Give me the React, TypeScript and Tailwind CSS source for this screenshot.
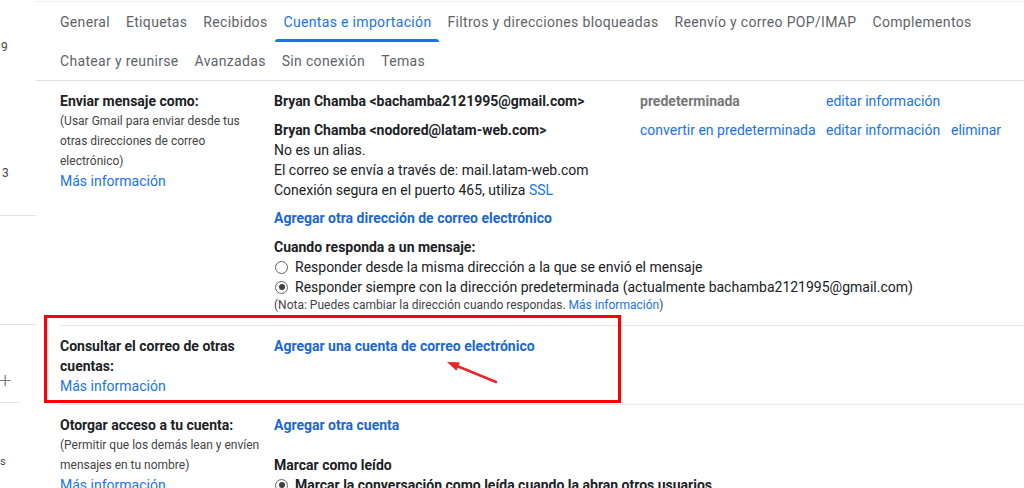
import React from "react";

const font = { fontFamily: "Roboto, 'Liberation Sans', Arial, sans-serif" };

const tabsTop = ["General", "Etiquetas", "Recibidos", "Cuentas e importación", "Filtros y direcciones bloqueadas", "Reenvío y correo POP/IMAP", "Complementos"];
const tabsBottom = ["Chatear y reunirse", "Avanzadas", "Sin conexión", "Temas"];

function Tab({ label, active = false }: { label: string; active?: boolean }) {
  return (
    <div className={`relative h-full flex items-center px-2 text-[14px] tracking-[0.33px] ${active ? "text-[#1a73e8]" : "text-[#5f6368]"}`}>
      {label}
      {active && <div className="absolute left-0 right-0 bottom-0 h-[3px] rounded-t-sm bg-[#1a73e8]" />}
    </div>
  );
}

function Radio({ checked = false }: { checked?: boolean }) {
  return (
    <span className="ml-px mr-[7px] w-[13px] h-[13px] shrink-0 rounded-full border-[1.5px] border-[#5f6368] flex items-center justify-center">
      {checked && <span className="w-[6px] h-[6px] rounded-full bg-[#3c4043]" />}
    </span>
  );
}

function Sidebar() {
  return (
    <div className="w-[36px] shrink-0 overflow-hidden text-[12px] text-[#444] leading-5">
      <div className="mt-[37px] pl-px">9</div>
      <div className="mt-[106px] pl-[2px]">3</div>
      <div className="mt-[32px] h-px bg-[#e4e4e4]" />
      <div className="mt-[108px] h-px bg-[#e4e4e4]" />
      <svg className="mt-[50px] block" width="11" height="11" viewBox="0 0 11 11">
        <path d="M0 5.5H10.5M5.2 0V11" stroke="#777" strokeWidth="1.2" />
      </svg>
      <div className="mt-[16px] w-[20px] h-px bg-[#e4e4e4]" />
      <div className="mt-[49px] text-[11px]">s</div>
    </div>
  );
}

export default function App() {
  return (
    <div className="relative w-[1024px] h-[488px] overflow-hidden bg-white flex text-[#202124]" style={font}>
      <Sidebar />
      <div className="flex-1 min-w-0 mt-px border-t border-[#eeeeee]">
        <div className="pl-4 border-b border-[#e0e0e0]">
          <div className="h-[40px] flex">
            {tabsTop.map((t) => (
              <Tab key={t} label={t} active={t === "Cuentas e importación"} />
            ))}
          </div>
          <div className="h-[38px] flex pt-px">
            {tabsBottom.map((t) => (
              <Tab key={t} label={t} />
            ))}
          </div>
        </div>

        <div className="ml-6 text-[14px]">
          {/* Enviar mensaje como */}
          <div className="flex border-b border-[#e8e8e8] pt-[10px] pb-3">
            <div className="w-[214px] shrink-0 pr-[11px]">
              <div className="font-bold leading-5">Enviar mensaje como:</div>
              <div className="text-[12px] leading-5 text-[#444]">
                (Usar Gmail para enviar desde tus otras direcciones de correo electrónico)
              </div>
              <div className="leading-5 text-[#1a73e8]">Más información</div>
            </div>
            <div className="flex-1 min-w-0">
              <div className="grid grid-cols-[366px_186px_125px_1fr] leading-5">
                <div className="font-bold">Bryan Chamba &lt;bachamba2121995@gmail.com&gt;</div>
                <div className="font-bold text-[#777]">predeterminada</div>
                <div className="text-[#1a73e8]">editar información</div>
                <div />
              </div>
              <div className="mt-[9px] grid grid-cols-[366px_186px_125px_1fr] leading-5">
                <div>
                  <div className="font-bold">Bryan Chamba &lt;nodored@latam-web.com&gt;</div>
                  <div>No es un alias.</div>
                  <div>El correo se envía a través de: mail.latam-web.com</div>
                  <div>
                    Conexión segura en el puerto 465, utiliza <span className="text-[#1a73e8]">SSL</span>
                  </div>
                </div>
                <div className="text-[#1a73e8]">convertir en predeterminada</div>
                <div className="text-[#1a73e8]">editar información</div>
                <div className="text-[#1a73e8]">eliminar</div>
              </div>
              <div className="mt-2 leading-5 font-bold text-[#1967d2]">Agregar otra dirección de correo electrónico</div>
              <div className="mt-[9px] leading-5 font-bold">Cuando responda a un mensaje:</div>
              <div className="flex items-center h-5">
                <Radio />
                Responder desde la misma dirección a la que se envió el mensaje
              </div>
              <div className="flex items-center h-5">
                <Radio checked />
                Responder siempre con la dirección predeterminada (actualmente bachamba2121995@gmail.com)
              </div>
              <div className="text-[12px] leading-4 text-[#444]">
                (Nota: Puedes cambiar la dirección cuando respondas.{" "}
                <span className="text-[#1a73e8]">Más información</span>)
              </div>
            </div>
          </div>

          {/* Consultar el correo de otras cuentas */}
          <div className="flex border-b border-[#e8e8e8] pt-[10px] pb-[8px]">
            <div className="w-[214px] shrink-0 leading-5">
              <div className="font-bold pr-4">Consultar el correo de otras cuentas:</div>
              <div className="text-[#1a73e8]">Más información</div>
            </div>
            <div className="flex-1 leading-5 font-bold text-[#1967d2]">Agregar una cuenta de correo electrónico</div>
          </div>

          {/* Otorgar acceso */}
          <div className="flex pt-[10px]">
            <div className="w-[214px] shrink-0 pr-[11px]">
              <div className="font-bold leading-5">Otorgar acceso a tu cuenta:</div>
              <div className="text-[12px] leading-5 text-[#444]">
                (Permitir que los demás lean y envíen mensajes en tu nombre)
              </div>
              <div className="leading-5 text-[#1a73e8]">Más información</div>
            </div>
            <div className="flex-1 leading-5">
              <div className="font-bold text-[#1967d2]">Agregar otra cuenta</div>
              <div className="mt-5 font-bold">Marcar como leído</div>
              <div className="flex items-center h-5 font-bold">
                <Radio checked />
                Marcar la conversación como leída cuando la abran otros usuarios
              </div>
            </div>
          </div>
        </div>
      </div>

      {/* annotation overlay */}
      <div className="absolute left-[44px] top-[315px] w-[577px] h-[88px] border-[3px] border-[#ff0000] pointer-events-none" />
      <svg className="absolute left-[440px] top-[355px] pointer-events-none" width="65" height="35" viewBox="0 0 65 35">
        <line x1="56" y1="27" x2="17" y2="11" stroke="#e8262b" strokeWidth="2.5" strokeLinecap="round" />
        <polygon points="7,7 19.8,7.3 16.4,15.7" fill="#e8262b" />
      </svg>
    </div>
  );
}
